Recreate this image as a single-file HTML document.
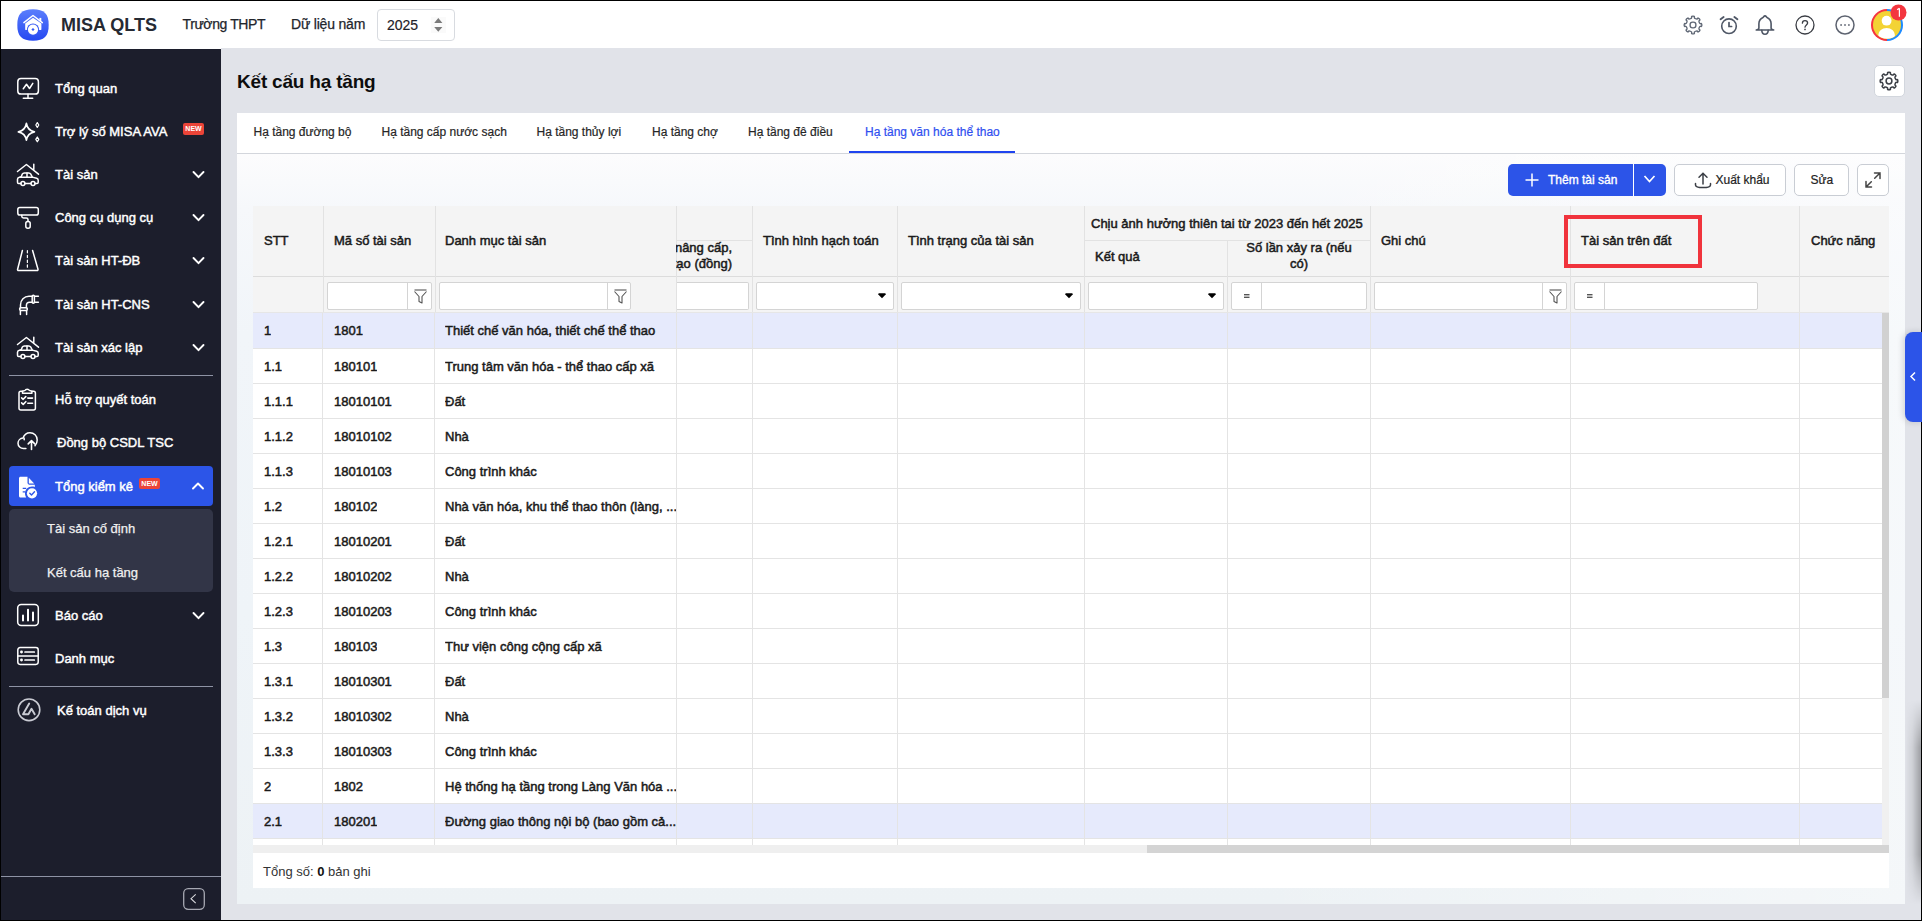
<!DOCTYPE html><html><head><meta charset="utf-8"><title>MISA QLTS</title><style>
*{box-sizing:border-box;margin:0;padding:0}
html,body{width:1922px;height:921px;overflow:hidden;background:#000;font-family:"Liberation Sans",sans-serif}
.abs{position:absolute}
.t{position:absolute;white-space:nowrap;line-height:1}
#hdr{position:absolute;left:1px;top:1px;width:1920px;height:48px;background:#fff}
#side{position:absolute;left:1px;top:49px;width:220px;height:871px;background:#1c1e2c}
#main{position:absolute;left:221px;top:48px;width:1700px;height:872px;background:#e1e3e9}
.mi{position:absolute;left:54px;font-size:13px;color:#fff;-webkit-text-stroke:0.45px #fff;line-height:20px;height:20px;white-space:nowrap}
.ic{position:absolute;left:12px;width:32px;height:32px}
.ic svg{width:32px;height:32px;display:block}
.chev{position:absolute;left:191px;width:14px;height:14px}
.tab{position:absolute;top:124px;font-size:12px;color:#262626;line-height:16px;white-space:nowrap;-webkit-text-stroke-width:0.2px}
.btn{position:absolute;top:164px;height:32px;border:1px solid #c9cdd4;border-radius:5px;background:#fff}
.hc{position:absolute;font-size:13px;color:#1a1a1a;-webkit-text-stroke:0.5px #1a1a1a;white-space:nowrap;line-height:16px}
.cell{position:absolute;font-size:13px;color:#1a1a1a;-webkit-text-stroke:0.5px #1a1a1a;white-space:nowrap;line-height:35px;height:35px;overflow:hidden}
.vl{position:absolute;width:1px;background:#e4e4e4}
.hl{position:absolute;height:1px;background:#e4e4e4}
.inp{position:absolute;top:282px;height:28px;background:#fff;border:1px solid #d4d4d4;border-radius:2px}
</style></head><body>
<div id="hdr"></div>
<svg class="abs" style="left:17px;top:9px" width="32" height="32" viewBox="0 0 32 32">
<defs><linearGradient id="lg" x1="0" y1="0" x2="0" y2="1"><stop offset="0" stop-color="#5b7efc"/><stop offset="1" stop-color="#2548f1"/></linearGradient></defs>
<path d="M16 0.3C27.2 0.3 31.7 4.8 31.7 16S27.2 31.7 16 31.7 0.3 27.2 0.3 16 4.8 0.3 16 0.3Z" fill="url(#lg)"/>
<path d="M6.9 13.6L16 6.5L25.3 13.6" fill="none" stroke="#fff" stroke-width="1.5" stroke-linecap="round" stroke-linejoin="round"/>
<rect x="22.4" y="8.9" width="1.9" height="3.2" fill="#fff"/>
<path d="M8.2 14.6L16 8.7L24.4 14.6V20.2C24.4 20.8 24 21.1 23.5 21.1H9.1C8.6 21.1 8.2 20.8 8.2 20.2Z" fill="#fff"/>
<circle cx="16" cy="20.6" r="6.1" fill="#3558f4"/><circle cx="16" cy="20.6" r="5.1" fill="#fff"/>
<path d="M16 18.9L17.6 20.4L16 22L14.4 20.4Z" fill="#3558f4"/>
</svg>
<div class="t" style="left:61px;top:16px;font-size:18px;font-weight:700;color:#262a33;letter-spacing:0px">MISA QLTS</div>
<div class="t" style="left:182.5px;top:16.5px;font-size:14px;letter-spacing:-0.4px;color:#22252c;-webkit-text-stroke:0.25px #22252c">Trường THPT</div>
<div class="t" style="left:291px;top:16.5px;font-size:14px;letter-spacing:-0.2px;color:#22252c;-webkit-text-stroke:0.25px #22252c">Dữ liệu năm</div>
<div class="abs" style="left:377px;top:9px;width:78px;height:32px;border:1px solid #d8dbe0;border-radius:4px;background:#fff"></div>
<div class="t" style="left:387px;top:18px;font-size:14px;color:#1e2128;-webkit-text-stroke:0.2px #1e2128">2025</div>
<svg class="abs" style="left:431px;top:17px" width="15" height="16" viewBox="0 0 15 16"><rect x="0" y="0" width="15" height="16" fill="#fafafa"/>
<path d="M3.2 6 L7.3 1.1 L11.4 6Z M3.2 10 L7.3 14.7 L11.4 10Z" fill="#7a7a7a"/></svg>
<svg class="abs" style="left:1683px;top:15px" width="20" height="20" viewBox="0 0 20 20" fill="none" stroke="#5f6775" stroke-width="1.35" stroke-linejoin="round">
<path d="M8.64 2.12 Q8.21 1.18 10.00 1.18 Q11.79 1.18 11.36 2.12 Q10.93 3.06 12.59 3.75 Q14.25 4.44 14.61 3.47 Q14.97 2.50 16.24 3.76 Q17.50 5.03 16.53 5.39 Q15.56 5.75 16.25 7.41 Q16.94 9.07 17.88 8.64 Q18.82 8.21 18.82 10.00 Q18.82 11.79 17.88 11.36 Q16.94 10.93 16.25 12.59 Q15.56 14.25 16.53 14.61 Q17.50 14.97 16.24 16.24 Q14.97 17.50 14.61 16.53 Q14.25 15.56 12.59 16.25 Q10.93 16.94 11.36 17.88 Q11.79 18.82 10.00 18.82 Q8.21 18.82 8.64 17.88 Q9.07 16.94 7.41 16.25 Q5.75 15.56 5.39 16.53 Q5.03 17.50 3.76 16.24 Q2.50 14.97 3.47 14.61 Q4.44 14.25 3.75 12.59 Q3.06 10.93 2.12 11.36 Q1.18 11.79 1.18 10.00 Q1.18 8.21 2.12 8.64 Q3.06 9.07 3.75 7.41 Q4.44 5.75 3.47 5.39 Q2.50 5.03 3.76 3.76 Q5.03 2.50 5.39 3.47 Q5.75 4.44 7.41 3.75 Q9.07 3.06 8.64 2.12Z"/><rect x="7.1" y="7.1" width="5.8" height="5.8" rx="2.6"/></svg>
<svg class="abs" style="left:1719px;top:15px" width="20" height="20" viewBox="0 0 20 20" fill="none" stroke="#4f5766" stroke-width="1.6" stroke-linecap="round">
<circle cx="10" cy="11.2" r="7.3"/><path d="M10 7.6V11.5H12.6" stroke-width="1.7"/><path d="M1.6 4.2L4.6 2M18.4 4.2L15.4 2" stroke-width="1.9"/></svg>
<svg class="abs" style="left:1755px;top:15px" width="20" height="20" viewBox="0 0 20 20" fill="none" stroke="#4f5766" stroke-width="1.6" stroke-linejoin="round" stroke-linecap="round">
<path d="M10 0.9C9 0.9 8.6 1.9 8 2.5C5.5 3.6 3.9 5.5 3.9 8.8V13C3.9 14 3 14.6 1.3 15H18.7C17 14.6 16.1 14 16.1 13V8.8C16.1 5.5 14.5 3.6 12 2.5C11.4 1.9 11 0.9 10 0.9Z"/><path d="M6.8 15.3C6.8 17.8 8.3 19.2 10 19.2S13.2 17.8 13.2 15.3"/></svg>
<svg class="abs" style="left:1795px;top:15px" width="20" height="20" viewBox="0 0 20 20" fill="none" stroke="#3a3d44" stroke-width="1.3" stroke-linecap="round">
<circle cx="10" cy="10" r="9"/><path d="M7.4 8.2C7.4 6.6 8.6 5.7 10 5.7S12.6 6.6 12.6 8.1C12.6 9.8 10 10.1 10 12.2"/><rect x="9.25" y="13.7" width="1.5" height="1.5" fill="#3a3d44" stroke="none"/></svg>
<svg class="abs" style="left:1835px;top:15px" width="20" height="20" viewBox="0 0 20 20" fill="none" stroke="#5d6370" stroke-width="1.5">
<circle cx="10" cy="10" r="9"/><rect x="5.3" y="9.2" width="1.6" height="1.6" fill="#5d6370" stroke="none"/><rect x="9.2" y="9.2" width="1.6" height="1.6" fill="#5d6370" stroke="none"/><rect x="13.1" y="9.2" width="1.6" height="1.6" fill="#5d6370" stroke="none"/></svg>
<svg class="abs" style="left:1870px;top:8px" width="34" height="34" viewBox="0 0 34 34">
<defs><clipPath id="av"><circle cx="17" cy="17" r="13.8"/></clipPath></defs>
<path d="M17 1 A16 16 0 0 0 17 33Z" fill="#f5333f"/><path d="M17 1 A16 16 0 0 1 17 33Z" fill="#1e8bff"/>
<circle cx="17" cy="17" r="14" fill="#f3d335"/>
<g clip-path="url(#av)" fill="#fff"><circle cx="16.6" cy="12.7" r="4.9"/><ellipse cx="16.6" cy="27" rx="8.3" ry="7"/></g>
</svg>
<svg class="abs" style="left:1890px;top:4px" width="17" height="17" viewBox="0 0 17 17"><circle cx="8.5" cy="8.5" r="8" fill="#f3363f"/>
<path d="M9.4 4.2V12.8M9.4 4.2L7.2 5.8" stroke="#fff" stroke-width="1.2" fill="none"/></svg>
<div id="side"></div>
<div class="abs" style="left:9px;top:466px;width:204px;height:40px;background:#2c55e8;border-radius:4px"></div>
<div class="abs" style="left:9px;top:509px;width:204px;height:83px;background:#323547;border-radius:5px"></div>
<div class="ic" style="top:72px"><svg viewBox="0 0 32 32" fill="none" stroke="#fff" stroke-width="1.5" stroke-linecap="round" stroke-linejoin="round"><rect x="5.8" y="6.5" width="20.6" height="15.6" rx="3.2"/><path d="M16 22.3V26.2M11.3 26.2H20.7"/><path d="M11.3 16.8L14.5 12.3L17.5 16.5L20.8 11.3"/></svg></div>
<div class="mi" style="left:55px;top:79px">Tổng quan</div>
<div class="ic" style="top:115px"><svg viewBox="0 0 32 32" fill="none" stroke="#fff" stroke-width="1.5" stroke-linecap="round" stroke-linejoin="round"><path d="M14.4 8.4C15.1 12.8 17.6 15.8 22.4 16.8C17.6 17.8 15.1 20.8 14.4 25.2C13.7 20.8 11.2 17.8 6.4 16.8C11.2 15.8 13.7 12.8 14.4 8.4Z" stroke-width="1.7"/><path d="M25.3 7.6L26.8 10L25.3 12.4L23.8 10Z" stroke-width="1.2"/><path d="M25.3 22L26.8 24.4L25.3 26.8L23.8 24.4Z" stroke-width="1.2"/></svg></div>
<div class="mi" style="left:55px;top:122px">Trợ lý số MISA AVA</div>
<div class="ic" style="top:158px"><svg viewBox="0 0 32 32" fill="none" stroke="#fff" stroke-width="1.5" stroke-linecap="round" stroke-linejoin="round"><path d="M5.5 13.5L14.4 6.5L26.5 16.2M21.8 6.3V11.5"/><path d="M9 25.6H6.6C5.9 25.6 5.5 25 5.5 24.3V21.3C5.5 20.3 6.3 19.5 7.3 19.3L9.2 18.8L10.3 16.1C10.7 15.3 11.4 14.9 12.3 14.9H16.8C17.7 14.9 18.4 15.4 18.8 16.2L20.3 19.1L24.7 20.3C25.6 20.6 26.2 21.4 26.2 22.3V24.3C26.2 25 25.7 25.6 25 25.6H23M13 25.6H18.9"/><circle cx="10.9" cy="25.5" r="2"/><circle cx="21" cy="25.5" r="2"/><path d="M8.3 19.3H20.6M15 15V19.2"/></svg></div>
<div class="mi" style="left:55px;top:165px">Tài sản</div>
<svg class="chev" style="top:167px" viewBox="0 0 14 14"><path d="M2.5 5L7.5 10.2L12.5 5" fill="none" stroke="#fff" stroke-width="1.9" stroke-linecap="round" stroke-linejoin="round"/></svg>
<div class="ic" style="top:201px"><svg viewBox="0 0 32 32" fill="none" stroke="#fff" stroke-width="1.5" stroke-linecap="round" stroke-linejoin="round"><rect x="5.8" y="6.5" width="20.5" height="7.6" rx="2.1"/><path d="M9.8 14.2V15.3C9.8 16.3 10.5 17 11.5 17H14.3C15.2 17 16 17.7 16 18.6V20.4"/><rect x="13.8" y="20.4" width="4.4" height="6.9" rx="2"/></svg></div>
<div class="mi" style="left:55px;top:208px">Công cụ dụng cụ</div>
<svg class="chev" style="top:210px" viewBox="0 0 14 14"><path d="M2.5 5L7.5 10.2L12.5 5" fill="none" stroke="#fff" stroke-width="1.9" stroke-linecap="round" stroke-linejoin="round"/></svg>
<div class="ic" style="top:244px"><svg viewBox="0 0 32 32" fill="none" stroke="#fff" stroke-width="1.5" stroke-linecap="round" stroke-linejoin="round"><path d="M10.4 6.5L5.6 25.3C5.4 26.1 5.9 26.6 6.6 26.6H25C25.7 26.6 26.1 26 26 25.3L20.6 6.5"/><path d="M15.4 6.5V24.5" stroke-dasharray="2.3 2.5" stroke-width="1.2"/></svg></div>
<div class="mi" style="left:55px;top:251px">Tài sản HT-ĐB</div>
<svg class="chev" style="top:253px" viewBox="0 0 14 14"><path d="M2.5 5L7.5 10.2L12.5 5" fill="none" stroke="#fff" stroke-width="1.9" stroke-linecap="round" stroke-linejoin="round"/></svg>
<div class="ic" style="top:288px"><svg viewBox="0 0 32 32" fill="none" stroke="#fff" stroke-width="1.5" stroke-linecap="round" stroke-linejoin="round"><path d="M8.5 19.8V17C8.5 12.1 12.2 8.3 17 8.3H20.2M14.4 19.8V17.5C14.4 15.6 15.9 14.3 17.7 14.3H20.2"/><rect x="20.2" y="7.3" width="2.2" height="7.9" rx="1.1"/><path d="M22.4 8.3H26.4M22.4 14.3H26.4"/><rect x="7.6" y="19.8" width="7.8" height="2.6" rx="1.3"/><path d="M8.4 22.4V26.4M14.6 22.4V26.4"/></svg></div>
<div class="mi" style="left:55px;top:295px">Tài sản HT-CNS</div>
<svg class="chev" style="top:297px" viewBox="0 0 14 14"><path d="M2.5 5L7.5 10.2L12.5 5" fill="none" stroke="#fff" stroke-width="1.9" stroke-linecap="round" stroke-linejoin="round"/></svg>
<div class="ic" style="top:331px"><svg viewBox="0 0 32 32" fill="none" stroke="#fff" stroke-width="1.5" stroke-linecap="round" stroke-linejoin="round"><path d="M5.5 13.5L14.4 6.5L26.5 16.2M21.8 6.3V11.5"/><path d="M9 25.6H6.6C5.9 25.6 5.5 25 5.5 24.3V21.3C5.5 20.3 6.3 19.5 7.3 19.3L9.2 18.8L10.3 16.1C10.7 15.3 11.4 14.9 12.3 14.9H16.8C17.7 14.9 18.4 15.4 18.8 16.2L20.3 19.1L24.7 20.3C25.6 20.6 26.2 21.4 26.2 22.3V24.3C26.2 25 25.7 25.6 25 25.6H23M13 25.6H18.9"/><circle cx="10.9" cy="25.5" r="2"/><circle cx="21" cy="25.5" r="2"/><path d="M8.3 19.3H20.6M15 15V19.2"/></svg></div>
<div class="mi" style="left:55px;top:338px">Tài sản xác lập</div>
<svg class="chev" style="top:340px" viewBox="0 0 14 14"><path d="M2.5 5L7.5 10.2L12.5 5" fill="none" stroke="#fff" stroke-width="1.9" stroke-linecap="round" stroke-linejoin="round"/></svg>
<div class="ic" style="top:383px"><svg viewBox="0 0 32 32" fill="none" stroke="#fff" stroke-width="1.5" stroke-linecap="round" stroke-linejoin="round"><path d="M10.5 8.3H8.8C7.7 8.3 7 9 7 10.1V25.3C7 26.3 7.7 27 8.8 27H21.6C22.7 27 23.4 26.3 23.4 25.3V10.1C23.4 9 22.7 8.3 21.6 8.3H19.9"/><path d="M10.5 10.3H19.9V8.3L17.3 7.4C16.8 5.7 13.6 5.7 13.1 7.4L10.5 8.3Z"/><path d="M9.6 14.8L11.2 16.3L13.8 13.6M9.6 19.9L11.2 21.4L13.8 18.7M15.8 15.1H20.5M15.8 20.2H20.5" stroke-width="1.6"/></svg></div>
<div class="mi" style="left:55px;top:390px">Hỗ trợ quyết toán</div>
<div class="ic" style="top:426px"><svg viewBox="0 0 32 32" fill="none" stroke="#fff" stroke-width="1.5" stroke-linecap="round" stroke-linejoin="round"><path d="M13.9 22.6H11.5C8.5 22.6 6 20.3 6 17.3C6 14.5 8.2 12.3 11 12.1C12.1 9 14.7 6.7 18 6.7C22 6.7 25.2 9.9 25.2 13.9C25.2 16 24.4 18.2 23 19.8"/><path d="M12.2 13.8C12.2 13 12.1 12.4 12 12.1"/><path d="M19.5 23.5V14.5M16.2 17.9L19.5 14.6L22.8 17.9" stroke-width="1.6"/></svg></div>
<div class="mi" style="left:57px;top:433px">Đồng bộ CSDL TSC</div>
<div class="ic" style="top:599px"><svg viewBox="0 0 32 32" fill="none" stroke="#fff" stroke-width="1.5" stroke-linecap="round" stroke-linejoin="round"><rect x="5.7" y="5.6" width="20.6" height="21" rx="3.5"/><path d="M11 16.4V21.6M16 10.7V21.6M21 13.5V21.6" stroke-width="2"/></svg></div>
<div class="mi" style="left:55px;top:606px">Báo cáo</div>
<svg class="chev" style="top:608px" viewBox="0 0 14 14"><path d="M2.5 5L7.5 10.2L12.5 5" fill="none" stroke="#fff" stroke-width="1.9" stroke-linecap="round" stroke-linejoin="round"/></svg>
<div class="ic" style="top:642px"><svg viewBox="0 0 32 32" fill="none" stroke="#fff" stroke-width="1.5" stroke-linecap="round" stroke-linejoin="round"><rect x="5.8" y="5.6" width="20.4" height="16.8" rx="2.3"/><path d="M5.8 14H26.2"/><path d="M13 10H22.3M13 18H22.3" stroke-width="1.7"/><circle cx="9.5" cy="10" r="0.7" fill="#fff"/><circle cx="9.5" cy="18" r="0.7" fill="#fff"/></svg></div>
<div class="mi" style="left:55px;top:649px">Danh mục</div>
<div class="ic" style="top:694px"><svg viewBox="0 0 32 32" fill="none" stroke="#c9cbd3" stroke-width="1.6"><circle cx="17" cy="15.8" r="10.8"/><path d="M17.2 9.6L11 20.2H16.4L19.5 14.8L22.7 20.2" stroke-width="1.9" stroke-linejoin="round" stroke-linecap="round"/></svg></div>
<div class="mi" style="left:57px;top:701px">Kế toán dịch vụ</div>
<div class="ic" style="top:470px"><svg viewBox="0 0 32 32"><path d="M8.5 6.8H15.5V12.8C15.5 13.9 16.3 14.7 17.4 14.7H22.8V17C21.8 16.6 20.9 16.5 20 16.5C16 16.5 13 19.5 13 23.5C13 25 13.5 26.3 14.2 27.4H8.5C7.7 27.4 7 26.7 7 25.9V8.3C7 7.5 7.7 6.8 8.5 6.8Z M10.7 18.4H14.2M10.7 21.8H13.2" fill="#fff"/><path d="M10.7 18.4H14.2M10.7 21.8H13.2" stroke="#2c55e8" stroke-width="1.2"/><path d="M16.8 7.8L22.2 13.5H16.8Z" fill="#fff"/><circle cx="20" cy="23.3" r="5.1" fill="#fff"/><path d="M17.8 23.3L19.5 24.9L22.5 21.8" fill="none" stroke="#2c55e8" stroke-width="1.4" stroke-linecap="round" stroke-linejoin="round"/></svg></div>
<div class="mi" style="left:55px;top:477px">Tổng kiểm kê</div>
<div class="abs" style="left:139px;top:478px;width:21px;height:11px;background:#eb4438;border-radius:2px;color:#fff;font-size:7px;font-weight:700;line-height:11px;text-align:center">NEW</div>
<svg class="chev" style="top:479px" viewBox="0 0 14 14"><path d="M2 9.5L7 4.5L12 9.5" fill="none" stroke="#fff" stroke-width="1.9" stroke-linecap="round" stroke-linejoin="round"/></svg>
<div class="abs" style="left:183px;top:123px;width:21px;height:12px;background:#eb4438;border-radius:2px;color:#fff;font-size:7px;font-weight:700;line-height:12px;text-align:center">NEW</div>
<div class="t" style="left:47px;top:521px;font-size:13px;color:#f0f0f0;-webkit-text-stroke:0.25px #f0f0f0;line-height:16px">Tài sản cố định</div>
<div class="t" style="left:47px;top:564.5px;font-size:13px;color:#f0f0f0;-webkit-text-stroke:0.25px #f0f0f0;line-height:16px">Kết cấu hạ tầng</div>
<div class="abs" style="left:9px;top:375px;width:204px;height:1px;background:#8e93a5"></div>
<div class="abs" style="left:9px;top:686px;width:204px;height:1px;background:#8e93a5"></div>
<div class="abs" style="left:1px;top:876px;width:220px;height:1px;background:#8e93a5"></div>
<svg class="abs" style="left:183px;top:888px" width="22" height="22" viewBox="0 0 22 22"><rect x="0.7" y="0.7" width="20.6" height="20.6" rx="4.5" fill="none" stroke="#a6a8b2" stroke-width="1.3"/>
<path d="M12.7 6.3L8 10.7L12.7 15.2" fill="none" stroke="#d8d9de" stroke-width="1.1"/></svg>
<div id="main"></div>
<div class="t" style="left:237px;top:72px;font-size:19px;font-weight:700;color:#0d0d0d;letter-spacing:-0.2px">Kết cấu hạ tầng</div>
<div class="abs" style="left:1874px;top:65px;width:31px;height:32px;background:#fff;border:1px solid #d2d6dd;border-radius:5px"></div>
<svg class="abs" style="left:1879px;top:71px" width="20" height="20" viewBox="0 0 20 20" fill="none" stroke="#3b3f46" stroke-width="1.5" stroke-linejoin="round">
<path d="M8.64 2.12 Q8.21 1.18 10.00 1.18 Q11.79 1.18 11.36 2.12 Q10.93 3.06 12.59 3.75 Q14.25 4.44 14.61 3.47 Q14.97 2.50 16.24 3.76 Q17.50 5.03 16.53 5.39 Q15.56 5.75 16.25 7.41 Q16.94 9.07 17.88 8.64 Q18.82 8.21 18.82 10.00 Q18.82 11.79 17.88 11.36 Q16.94 10.93 16.25 12.59 Q15.56 14.25 16.53 14.61 Q17.50 14.97 16.24 16.24 Q14.97 17.50 14.61 16.53 Q14.25 15.56 12.59 16.25 Q10.93 16.94 11.36 17.88 Q11.79 18.82 10.00 18.82 Q8.21 18.82 8.64 17.88 Q9.07 16.94 7.41 16.25 Q5.75 15.56 5.39 16.53 Q5.03 17.50 3.76 16.24 Q2.50 14.97 3.47 14.61 Q4.44 14.25 3.75 12.59 Q3.06 10.93 2.12 11.36 Q1.18 11.79 1.18 10.00 Q1.18 8.21 2.12 8.64 Q3.06 9.07 3.75 7.41 Q4.44 5.75 3.47 5.39 Q2.50 5.03 3.76 3.76 Q5.03 2.50 5.39 3.47 Q5.75 4.44 7.41 3.75 Q9.07 3.06 8.64 2.12Z"/><circle cx="10" cy="10" r="2.9"/></svg>
<div class="abs" style="left:237px;top:113px;width:1668px;height:791px;background:linear-gradient(90deg,rgba(255,255,255,0) 0%,rgba(255,255,255,0) 60%,rgba(255,255,255,0.4) 100%),linear-gradient(180deg,#ffffff 0px,#fcfcfd 42px,#f6f8fb 95px,#f1f5f9 220px,#eff4f8 500px,#edf2f5 100%)"></div>
<div class="abs" style="left:237px;top:113px;width:1668px;height:40px;background:#fff"></div>
<div class="abs" style="left:237px;top:153px;width:1668px;height:1px;background:#d3d6dc"></div>
<div class="tab" style="left:253.5px">Hạ tầng đường bộ</div>
<div class="tab" style="left:381.5px">Hạ tầng cấp nước sạch</div>
<div class="tab" style="left:536.5px">Hạ tầng thủy lợi</div>
<div class="tab" style="left:652px">Hạ tầng chợ</div>
<div class="tab" style="left:748px">Hạ tầng đê điều</div>
<div class="tab" style="left:865px;color:#2f4ff0">Hạ tầng văn hóa thể thao</div>
<div class="abs" style="left:849px;top:151px;width:166px;height:2px;background:#1f44ef"></div>
<div class="abs" style="left:1508px;top:164px;width:158px;height:32px;background:#2c54e8;border-radius:5px"></div>
<div class="abs" style="left:1633px;top:164px;width:1px;height:32px;background:#fff"></div>
<svg class="abs" style="left:1525px;top:173px" width="14" height="14" viewBox="0 0 14 14"><path d="M7 0.5V13.5M0.5 7H13.5" stroke="#fff" stroke-width="1.5"/></svg>
<div class="t" style="left:1548px;top:174px;font-size:12px;color:#fff;-webkit-text-stroke:0.35px #fff">Thêm tài sản</div>
<svg class="abs" style="left:1643px;top:174px" width="13" height="10" viewBox="0 0 13 10"><path d="M1.5 2L6.5 7.5L11.5 2" fill="none" stroke="#fff" stroke-width="1.7"/></svg>
<div class="btn" style="left:1674px;width:112px"></div>
<svg class="abs" style="left:1694px;top:172px" width="18" height="17" viewBox="0 0 18 17" fill="none" stroke="#3b3f46" stroke-width="1.5" stroke-linecap="round"><path d="M9 12V1.5M5 5.3L9 1.3L13 5.3"/><path d="M1.5 11.5V13C1.5 14.7 4.5 15.6 9 15.6S16.5 14.7 16.5 13V11.5"/></svg>
<div class="t" style="left:1715.5px;top:174px;font-size:12px;color:#222;-webkit-text-stroke:0.2px #222">Xuất khẩu</div>
<div class="btn" style="left:1794px;width:55px"></div>
<div class="t" style="left:1810.5px;top:174px;font-size:12px;color:#222;-webkit-text-stroke:0.2px #222">Sửa</div>
<div class="btn" style="left:1857px;width:32px"></div>
<svg class="abs" style="left:1863px;top:170px" width="20" height="20" viewBox="0 0 20 20" fill="none" stroke="#444" stroke-width="1.5" stroke-linecap="round"><path d="M11.5 3H17V8.5M17 3L11.7 8.3M8.5 17H3V11.5M3 17L8.3 11.7"/></svg>
<div class="abs" style="left:253px;top:206px;width:1636px;height:107px;background:#f4f4f4"></div>
<div class="abs" style="left:253px;top:313px;width:1629px;height:532px;background:#fff;overflow:hidden">
<div class="abs" style="left:0;top:0px;width:1629px;height:35px;background:#e6eafc"></div>
<div class="hl" style="left:0;top:35px;width:1629px"></div>
<div class="cell" style="left:11px;top:0px">1</div>
<div class="cell" style="left:81px;top:0px">1801</div>
<div class="cell" style="left:192px;top:0px;width:231px">Thiết chế văn hóa, thiết chế thể thao</div>
<div class="hl" style="left:0;top:70px;width:1629px"></div>
<div class="cell" style="left:11px;top:36px">1.1</div>
<div class="cell" style="left:81px;top:36px">180101</div>
<div class="cell" style="left:192px;top:36px;width:231px">Trung tâm văn hóa - thể thao cấp xã</div>
<div class="hl" style="left:0;top:105px;width:1629px"></div>
<div class="cell" style="left:11px;top:71px">1.1.1</div>
<div class="cell" style="left:81px;top:71px">18010101</div>
<div class="cell" style="left:192px;top:71px;width:231px">Đất</div>
<div class="hl" style="left:0;top:140px;width:1629px"></div>
<div class="cell" style="left:11px;top:106px">1.1.2</div>
<div class="cell" style="left:81px;top:106px">18010102</div>
<div class="cell" style="left:192px;top:106px;width:231px">Nhà</div>
<div class="hl" style="left:0;top:175px;width:1629px"></div>
<div class="cell" style="left:11px;top:141px">1.1.3</div>
<div class="cell" style="left:81px;top:141px">18010103</div>
<div class="cell" style="left:192px;top:141px;width:231px">Công trình khác</div>
<div class="hl" style="left:0;top:210px;width:1629px"></div>
<div class="cell" style="left:11px;top:176px">1.2</div>
<div class="cell" style="left:81px;top:176px">180102</div>
<div class="cell" style="left:192px;top:176px;width:231px">Nhà văn hóa, khu thể thao thôn (làng, ...</div>
<div class="hl" style="left:0;top:245px;width:1629px"></div>
<div class="cell" style="left:11px;top:211px">1.2.1</div>
<div class="cell" style="left:81px;top:211px">18010201</div>
<div class="cell" style="left:192px;top:211px;width:231px">Đất</div>
<div class="hl" style="left:0;top:280px;width:1629px"></div>
<div class="cell" style="left:11px;top:246px">1.2.2</div>
<div class="cell" style="left:81px;top:246px">18010202</div>
<div class="cell" style="left:192px;top:246px;width:231px">Nhà</div>
<div class="hl" style="left:0;top:315px;width:1629px"></div>
<div class="cell" style="left:11px;top:281px">1.2.3</div>
<div class="cell" style="left:81px;top:281px">18010203</div>
<div class="cell" style="left:192px;top:281px;width:231px">Công trình khác</div>
<div class="hl" style="left:0;top:350px;width:1629px"></div>
<div class="cell" style="left:11px;top:316px">1.3</div>
<div class="cell" style="left:81px;top:316px">180103</div>
<div class="cell" style="left:192px;top:316px;width:231px">Thư viện công cộng cấp xã</div>
<div class="hl" style="left:0;top:385px;width:1629px"></div>
<div class="cell" style="left:11px;top:351px">1.3.1</div>
<div class="cell" style="left:81px;top:351px">18010301</div>
<div class="cell" style="left:192px;top:351px;width:231px">Đất</div>
<div class="hl" style="left:0;top:420px;width:1629px"></div>
<div class="cell" style="left:11px;top:386px">1.3.2</div>
<div class="cell" style="left:81px;top:386px">18010302</div>
<div class="cell" style="left:192px;top:386px;width:231px">Nhà</div>
<div class="hl" style="left:0;top:455px;width:1629px"></div>
<div class="cell" style="left:11px;top:421px">1.3.3</div>
<div class="cell" style="left:81px;top:421px">18010303</div>
<div class="cell" style="left:192px;top:421px;width:231px">Công trình khác</div>
<div class="hl" style="left:0;top:490px;width:1629px"></div>
<div class="cell" style="left:11px;top:456px">2</div>
<div class="cell" style="left:81px;top:456px">1802</div>
<div class="cell" style="left:192px;top:456px;width:231px">Hệ thống hạ tầng trong Làng Văn hóa ...</div>
<div class="abs" style="left:0;top:491px;width:1629px;height:34px;background:#e6eafc"></div>
<div class="hl" style="left:0;top:525px;width:1629px"></div>
<div class="cell" style="left:11px;top:491px">2.1</div>
<div class="cell" style="left:81px;top:491px">180201</div>
<div class="cell" style="left:192px;top:491px;width:231px">Đường giao thông nội bộ (bao gồm cả...</div>
<div class="hl" style="left:0;top:560px;width:1629px"></div>
<div class="vl" style="left:69px;top:0;height:532px"></div>
<div class="vl" style="left:181px;top:0;height:532px"></div>
<div class="vl" style="left:423px;top:0;height:532px"></div>
<div class="vl" style="left:499px;top:0;height:532px"></div>
<div class="vl" style="left:644px;top:0;height:532px"></div>
<div class="vl" style="left:831px;top:0;height:532px"></div>
<div class="vl" style="left:974px;top:0;height:532px"></div>
<div class="vl" style="left:1117px;top:0;height:532px"></div>
<div class="vl" style="left:1317px;top:0;height:532px"></div>
<div class="vl" style="left:1546px;top:0;height:532px"></div>
</div>
<div class="hl" style="left:253px;top:276px;width:1636px;background:#dcdcdc"></div>
<div class="hl" style="left:253px;top:312px;width:1636px;background:#e6e6e6"></div>
<div class="vl" style="left:323px;top:206px;height:106px;background:#e2e2e2"></div>
<div class="vl" style="left:435px;top:206px;height:106px;background:#e2e2e2"></div>
<div class="vl" style="left:676px;top:206px;height:106px;background:#e2e2e2"></div>
<div class="vl" style="left:752px;top:206px;height:106px;background:#e2e2e2"></div>
<div class="vl" style="left:897px;top:206px;height:106px;background:#e2e2e2"></div>
<div class="vl" style="left:1084px;top:206px;height:106px;background:#e2e2e2"></div>
<div class="vl" style="left:1227px;top:240px;height:72px;background:#e2e2e2"></div>
<div class="vl" style="left:1370px;top:206px;height:106px;background:#e2e2e2"></div>
<div class="vl" style="left:1570px;top:206px;height:106px;background:#e2e2e2"></div>
<div class="vl" style="left:1799px;top:206px;height:106px;background:#e2e2e2"></div>
<div class="hl" style="left:676px;top:240px;width:76px;background:#e2e2e2"></div>
<div class="hl" style="left:1084px;top:240px;width:286px;background:#e2e2e2"></div>
<div class="hc" style="left:264px;top:233px;">STT</div>
<div class="hc" style="left:334px;top:233px;">Mã số tài sản</div>
<div class="hc" style="left:445px;top:233px;">Danh mục tài sản</div>
<div class="abs" style="left:676px;top:240px;width:76px;height:36px;overflow:hidden"><div class="hc" style="left:-144px;top:0px;width:200px;text-align:right;line-height:16px">xây dựng, nâng cấp,<br>cải tạo (đồng)</div></div>
<div class="hc" style="left:763px;top:233px;">Tình hình hạch toán</div>
<div class="hc" style="left:908px;top:233px;">Tình trạng của tài sản</div>
<div class="hc" style="left:1091px;top:216px;">Chịu ảnh hưởng thiên tai từ 2023 đến hết 2025</div>
<div class="hc" style="left:1095px;top:249px;">Kết quả</div>
<div class="hc" style="left:1199px;top:240px;width:200px;text-align:center;line-height:16px">Số lần xảy ra (nếu<br>có)</div>
<div class="hc" style="left:1381px;top:233px;">Ghi chú</div>
<div class="hc" style="left:1581px;top:233px;">Tài sản trên đất</div>
<div class="hc" style="left:1811px;top:233px;">Chức năng</div>
<div class="abs" style="left:1564px;top:215px;width:138px;height:53px;border:4px solid #f0333c"></div>
<div class="inp" style="left:327px;width:105px"></div>
<div class="abs" style="left:407px;top:282px;width:1px;height:28px;background:#d4d4d4"></div>
<svg class="abs" style="left:413px;top:288px" width="15" height="16" viewBox="0 0 15 16" fill="none" stroke="#555" stroke-width="1.1" stroke-linejoin="round"><path d="M1.5 2H13.5"/><path d="M1.5 3.5L6 8.5V13.5L9 15V8.5L13.5 3.5"/></svg>
<div class="inp" style="left:439px;width:192px"></div>
<div class="abs" style="left:607px;top:282px;width:1px;height:28px;background:#d4d4d4"></div>
<svg class="abs" style="left:613px;top:288px" width="15" height="16" viewBox="0 0 15 16" fill="none" stroke="#555" stroke-width="1.1" stroke-linejoin="round"><path d="M1.5 2H13.5"/><path d="M1.5 3.5L6 8.5V13.5L9 15V8.5L13.5 3.5"/></svg>
<div class="inp" style="left:677px;width:72px;border-left:none;border-radius:0 2px 2px 0"></div>
<div class="inp" style="left:756px;width:138px"></div>
<svg class="abs" style="left:878px;top:293px" width="8" height="6" viewBox="0 0 8 6"><path d="M0.3 0.9Q0.3 0.2 1 0.2H7Q7.7 0.2 7.7 0.9V1.6L4 5.2L0.3 1.6Z" fill="#000"/></svg>
<div class="inp" style="left:901px;width:180px"></div>
<svg class="abs" style="left:1065px;top:293px" width="8" height="6" viewBox="0 0 8 6"><path d="M0.3 0.9Q0.3 0.2 1 0.2H7Q7.7 0.2 7.7 0.9V1.6L4 5.2L0.3 1.6Z" fill="#000"/></svg>
<div class="inp" style="left:1088px;width:136px"></div>
<svg class="abs" style="left:1208px;top:293px" width="8" height="6" viewBox="0 0 8 6"><path d="M0.3 0.9Q0.3 0.2 1 0.2H7Q7.7 0.2 7.7 0.9V1.6L4 5.2L0.3 1.6Z" fill="#000"/></svg>
<div class="inp" style="left:1231px;width:136px"></div>
<div class="abs" style="left:1261px;top:282px;width:1px;height:28px;background:#d4d4d4"></div>
<svg class="abs" style="left:1244px;top:293px" width="6" height="6" viewBox="0 0 6 6"><rect x="0" y="1" width="5.5" height="1.4" fill="#555"/><rect x="0" y="3.6" width="5.5" height="1.4" fill="#555"/></svg>
<div class="inp" style="left:1374px;width:193px"></div>
<div class="abs" style="left:1542px;top:282px;width:1px;height:28px;background:#d4d4d4"></div>
<svg class="abs" style="left:1548px;top:288px" width="15" height="16" viewBox="0 0 15 16" fill="none" stroke="#555" stroke-width="1.1" stroke-linejoin="round"><path d="M1.5 2H13.5"/><path d="M1.5 3.5L6 8.5V13.5L9 15V8.5L13.5 3.5"/></svg>
<div class="inp" style="left:1574px;width:184px"></div>
<div class="abs" style="left:1604px;top:282px;width:1px;height:28px;background:#d4d4d4"></div>
<svg class="abs" style="left:1587px;top:293px" width="6" height="6" viewBox="0 0 6 6"><rect x="0" y="1" width="5.5" height="1.4" fill="#555"/><rect x="0" y="3.6" width="5.5" height="1.4" fill="#555"/></svg>
<div class="abs" style="left:1882px;top:313px;width:7px;height:532px;background:#f0f0f0"></div>
<div class="abs" style="left:1882px;top:313px;width:7px;height:385px;background:#d1d1d1"></div>
<div class="abs" style="left:253px;top:845px;width:1636px;height:8px;background:#efefef"></div>
<div class="abs" style="left:1147px;top:845px;width:742px;height:8px;background:#d4d4d4"></div>
<div class="abs" style="left:253px;top:853px;width:1636px;height:35px;background:#fff"></div>
<div class="t" style="left:263px;top:865px;font-size:13px;color:#333">Tổng số: <b style="color:#111">0</b> bản ghi</div>
<div class="abs" style="left:1905px;top:332px;width:20px;height:90px;background:#2c54e8;border-radius:8px 0 0 8px;box-shadow:-2px 0 6px rgba(0,0,0,0.15)"></div>
<svg class="abs" style="left:1909px;top:371px" width="8" height="11" viewBox="0 0 8 11"><path d="M6 1.5L2 5.5L6 9.5" fill="none" stroke="#fff" stroke-width="1.5"/></svg>
<div class="abs" style="left:1905px;top:700px;width:16px;height:215px;background:linear-gradient(90deg,rgba(0,0,0,0) 0%,rgba(0,0,0,0.08) 45%,rgba(0,0,0,0.3) 100%);-webkit-mask-image:linear-gradient(180deg,transparent 0%,#000 22%,#000 72%,transparent 95%)"></div>
</body></html>
